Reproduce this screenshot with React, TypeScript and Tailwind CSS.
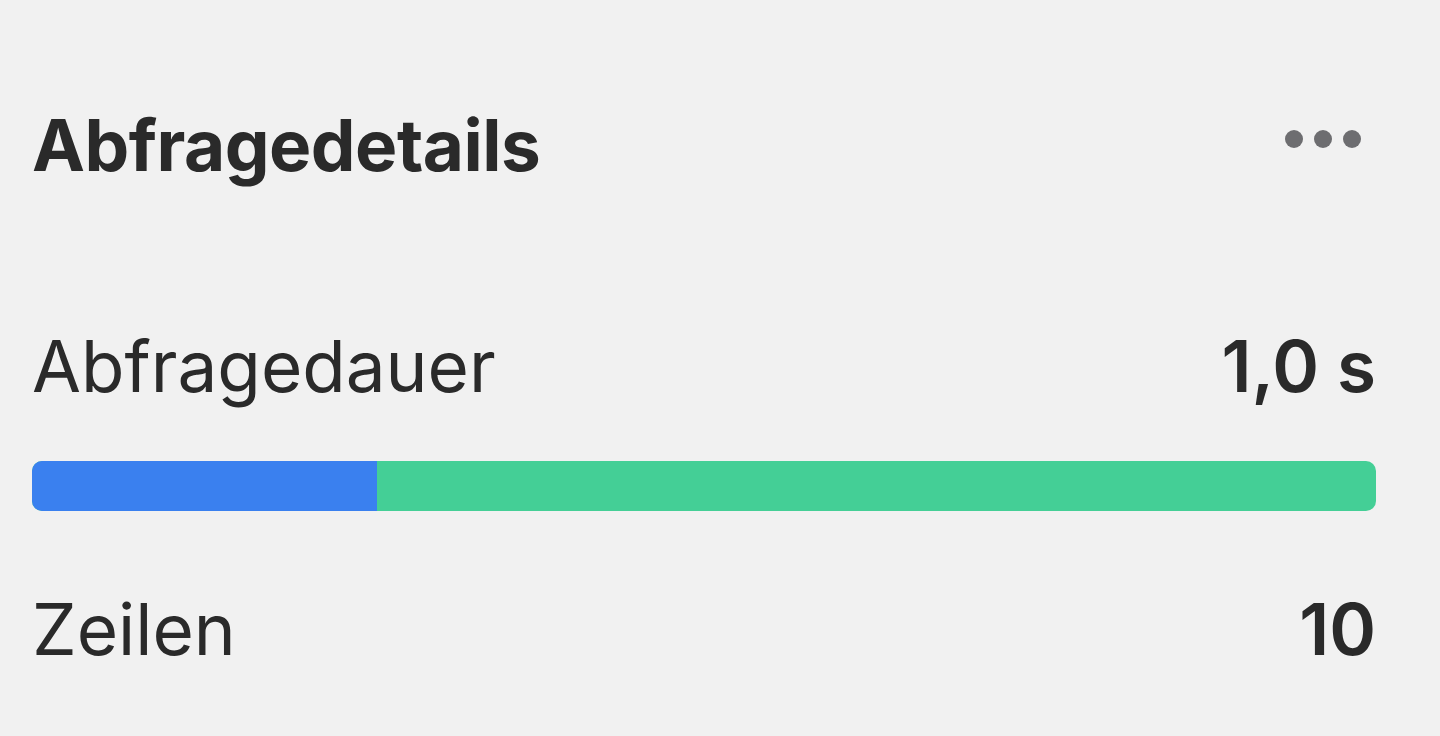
import React from "react";

export default function App() {
  const durationPct = (377 - 32) / (1377 - 32) * 100;
  return (
    <div className="w-[1440px] h-[736px] bg-[#f1f1f1] overflow-hidden text-[#2a2a2a]" style={{ fontFamily: "Inter, 'Noto Sans', sans-serif" }}>
      <div className="pl-[32px] pr-[64px] pt-[100px]">
        <div className="flex items-center justify-between h-[90px]">
          <h1 className="text-[71px] font-bold leading-none tracking-[-0.5px]">Abfragedetails</h1>
          <div className="flex gap-[11px] mr-[15px] mb-[12px]">
            <span className="w-[18px] h-[18px] rounded-full bg-[#6d6d70]" />
            <span className="w-[18px] h-[18px] rounded-full bg-[#6d6d70]" />
            <span className="w-[18px] h-[18px] rounded-full bg-[#6d6d70]" />
          </div>
        </div>
        <div className="flex items-baseline justify-between mt-[141px]">
          <span className="text-[71px] font-normal leading-none">Abfragedauer</span>
          <span className="text-[71px] font-semibold leading-none">1,0 s</span>
        </div>
        <div className="mt-[59px] h-[50px] w-full rounded-[10px] overflow-hidden flex bg-[#44cf96]">
          <div className="h-full bg-[#3a80ef]" style={{ width: `${durationPct}%` }} />
        </div>
        <div className="flex items-baseline justify-between mt-[83px]">
          <span className="text-[71px] font-normal leading-none">Zeilen</span>
          <span className="text-[71px] font-semibold leading-none">10</span>
        </div>
      </div>
    </div>
  );
}
